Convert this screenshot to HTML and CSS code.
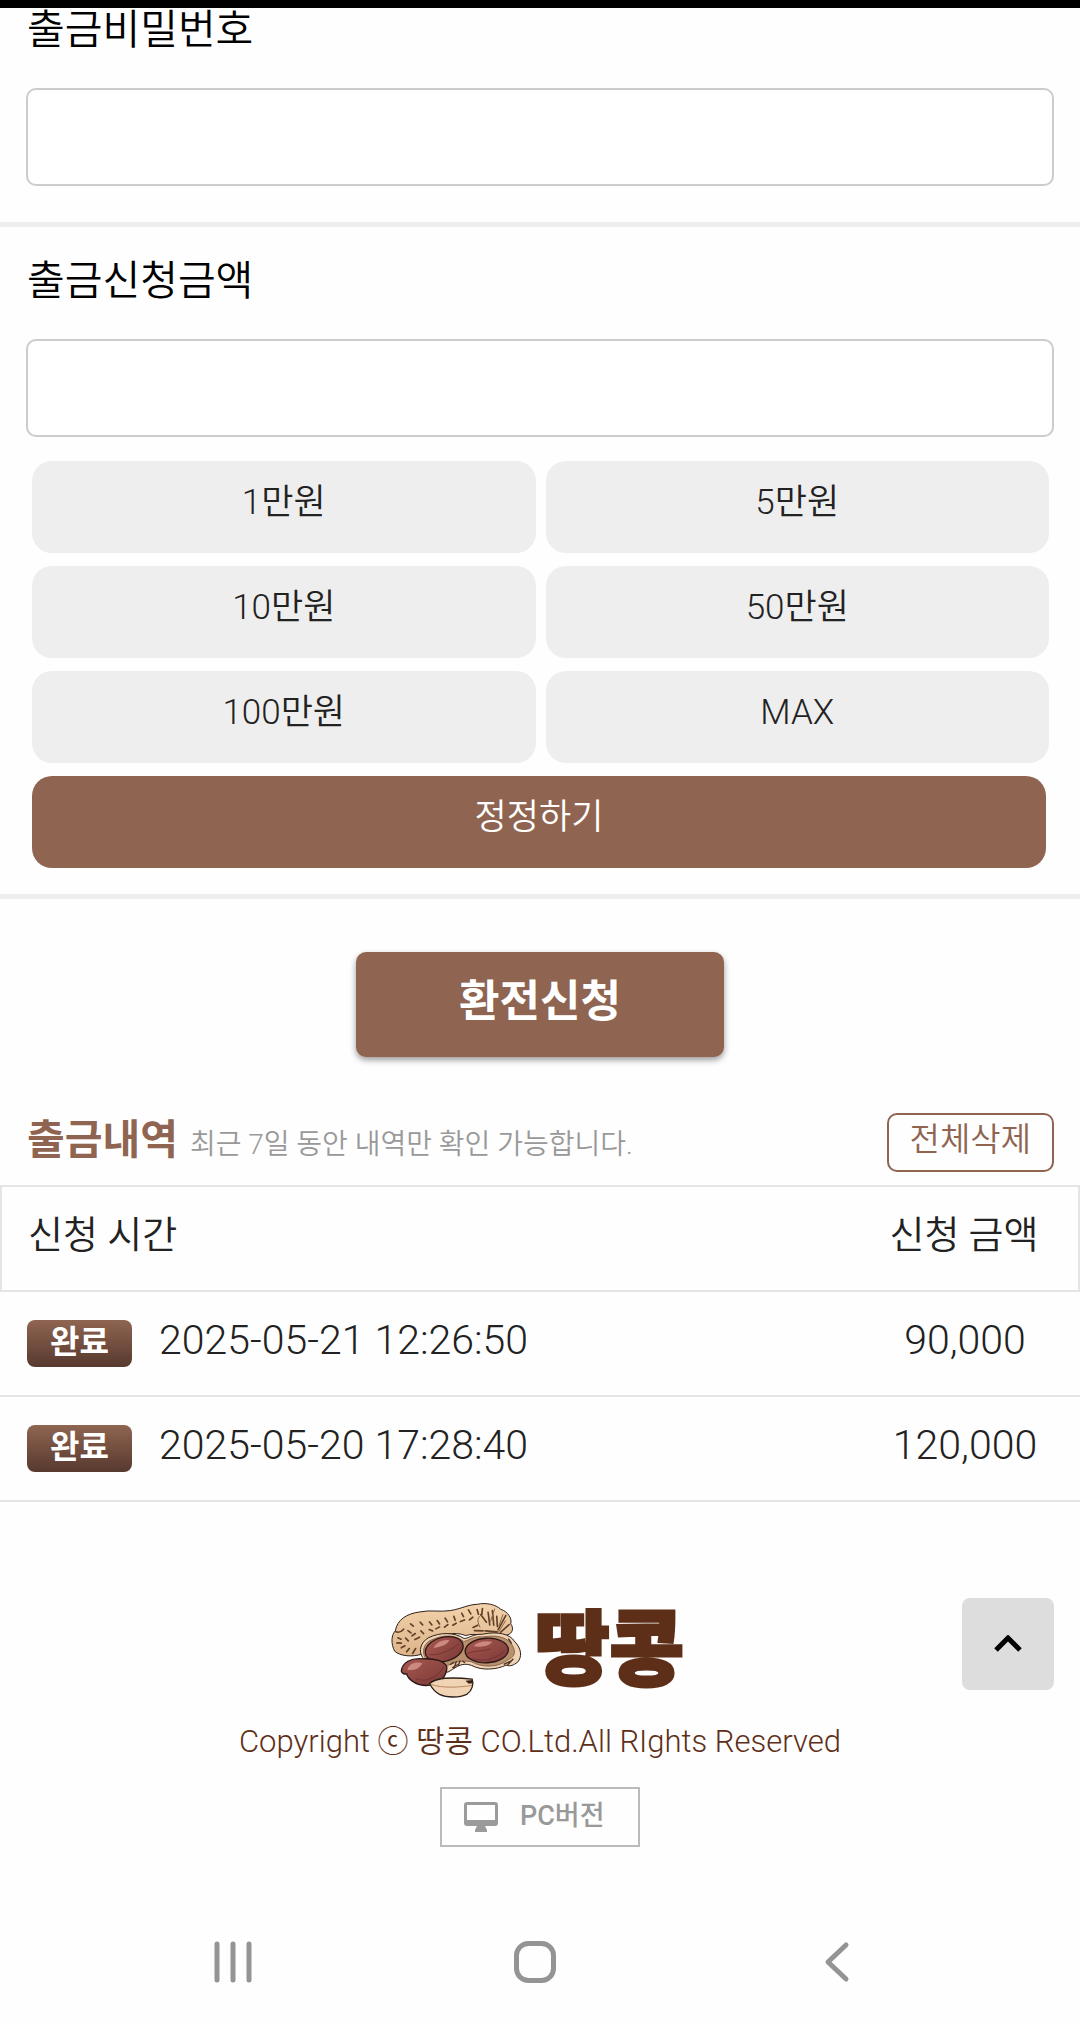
FILE: index.html
```html
<!DOCTYPE html>
<html lang="ko">
<head>
	<meta charset="UTF-8">
	<meta name="viewport" content="width=device-width, initial-scale=1">
	<title>환전신청</title>
	<link rel="stylesheet" href="styles.css">
</head>
<body>
	<div class="status_bar"></div>

	<form class="exchange_form">
		<div class="form_section first">
			<label class="form_label" for="withdraw_pw">출금비밀번호</label>
			<input type="password" id="withdraw_pw" class="form_input">
		</div>

		<div class="form_section">
			<label class="form_label" for="withdraw_amount">출금신청금액</label>
			<input type="text" id="withdraw_amount" class="form_input">
			<div class="amount_btns">
				<button type="button" class="btn_amount">1만원</button>
				<button type="button" class="btn_amount">5만원</button>
				<button type="button" class="btn_amount">10만원</button>
				<button type="button" class="btn_amount">50만원</button>
				<button type="button" class="btn_amount">100만원</button>
				<button type="button" class="btn_amount">MAX</button>
				<button type="reset" class="btn_amount btn_reset">정정하기</button>
			</div>
		</div>

		<button type="submit" class="btn_submit">환전신청</button>
	</form>

	<div class="history_head">
		<div class="history_text">
			<h2 class="history_title">출금내역</h2>
			<span class="history_note">최근 7일 동안 내역만 확인 가능합니다.</span>
		</div>
		<button type="button" class="btn_delete">전체삭제</button>
	</div>

	<table class="history">
		<thead>
			<tr>
				<th class="time">신청 시간</th>
				<th class="amount">신청 금액</th>
			</tr>
		</thead>
		<tbody>
			<tr>
				<td class="time"><div class="time_wrap"><span class="badge">완료</span>2025-05-21 12:26:50</div></td>
				<td class="amount">90,000</td>
			</tr>
			<tr>
				<td class="time"><div class="time_wrap"><span class="badge">완료</span>2025-05-20 17:28:40</div></td>
				<td class="amount">120,000</td>
			</tr>
		</tbody>
	</table>

	<footer class="footer">
		<div class="logo">
			<svg class="logo_peanut" viewBox="28 36 400 290" aria-hidden="true">
				<defs>
					<linearGradient id="shell" x1="0" y1="0" x2="0" y2="1">
						<stop offset="0" stop-color="#f3d2ab"/>
						<stop offset="1" stop-color="#dcb48a"/>
					</linearGradient>
					<linearGradient id="nut" x1="0" y1="0" x2="1" y2="1">
						<stop offset="0" stop-color="#a75850"/>
						<stop offset="1" stop-color="#7c3a38"/>
					</linearGradient>
				</defs>
				<!-- back shell -->
				<path d="M42 183C30 160 32 134 44 122C50 88 78 70 118 65C150 58 177 66 209 61C245 55 262 43 291 42C317 36 346 43 361 57C383 64 396 86 391 101C401 113 397 130 381 134L350 152C305 137 286 127 256 136C220 122 180 135 143 145C126 158 126 172 127 191C96 202 58 198 42 183Z" fill="url(#shell)" stroke="#2e2018" stroke-width="3"/>
				<path d="M44 124C54 129 61 126 69 117M52 143l9 4M49 158l13 1M62 173l11-6M78 185l8-10M96 190l9-15M75 144l8 8M82 121l9 7M98 108l-8-7M104 130l-10 7M103 148l14-7M121 122l8 8M126 104l-7-8M147 95l7 9M146 118l10 4M170 91l7 10M166 116l11-6M194 84l7 11M192 111l10-8M220 78l4 12M217 105l10-6M244 69l5 10M240 94l12-5M264 59l7 12M267 89l10-8M290 58l4 14M278 112l14-7M306 55l-2 18M318 96l-17-23M328 104l-5-38M340 105l-4-44M351 109l-2-31M353 119l23-43M361 126l25-23M282 121l26 1M314 122l36 3" fill="none" stroke="#604028" stroke-width="5" stroke-linecap="round"/>
				<path d="M299 112C288 89 292 81 303 74M368 72L355 108M343 55L330 94M376 91L354 126" fill="none" stroke="#8b6244" stroke-width="3"/>
				<!-- open half with its kernels -->
				<path d="M126 202C113 182 120 157 143 143C179 125 222 126 251 145C268 144 276 131 306 132C351 122 390 132 402 153C425 176 425 201 412 216C399 225 391 230 377 225C351 238 304 243 274 226C240 213 220 238 202 246C172 244 139 225 126 202Z" fill="#f0d3b2" stroke="#2e2018" stroke-width="3"/>
				<path d="M132 200C123 178 133 157 153 149C190 132 227 133 250 154C272 147 282 138 309 140C354 132 383 144 395 164C410 188 401 201 380 211C351 234 302 232 273 215C236 208 211 220 196 230C165 234 145 216 132 200Z" fill="#b8906e" stroke="#654631" stroke-width="2"/>
				<path d="M209 224l12-8M215 233l17-10M228 213l-8 22M239 211l-6 16M254 218l-8-5M370 223l21-10M381 225l18-19M384 145l10 15" fill="none" stroke="#4c3020" stroke-width="4"/>
				<ellipse cx="191" cy="177" rx="58" ry="36" transform="rotate(-14 191 177)" fill="url(#nut)" stroke="#2c1716" stroke-width="4"/>
				<ellipse cx="319" cy="181" rx="65" ry="37" transform="rotate(-3 319 181)" fill="url(#nut)" stroke="#2c1716" stroke-width="4"/>
				<path d="M159 173C168 156 187 147 207 150C200 164 180 170 159 173ZM279 168C292 154 315 150 335 155C325 170 302 171 279 168Z" fill="#cc8980"/>
				<path d="M146 193C174 198 211 181 235 160M260 190C287 180 304 184 329 177M273 205C313 219 354 202 373 181" fill="none" stroke="#642b2a" stroke-width="2"/>
				<!-- loose kernels -->
				<path d="M62 243C65 216 91 203 126 206C163 204 193 213 199 231C199 257 178 285 142 286C107 288 82 267 78 251C70 253 64 249 62 243Z" fill="url(#nut)" stroke="#2c1716" stroke-width="4"/>
				<path d="M80 239C84 220 106 213 125 219C117 236 98 242 80 239Z" fill="#cc8980"/>
				<path d="M105 265C137 280 174 260 189 230" fill="none" stroke="#642b2a" stroke-width="2"/>
				<path d="M147 281C163 263 208 260 275 267C280 280 276 301 260 312C236 324 198 323 177 313C160 304 153 292 147 281Z" fill="#f1d4b4" stroke="#2e2018" stroke-width="4"/>
				<path d="M151 283C187 295 234 292 275 286" fill="none" stroke="#b68762" stroke-width="3"/>
				<path d="M276 270L255 272L264 280L276 280Z" fill="#312016"/>
			</svg>
			<span class="logo_text">땅콩</span>
		</div>
		<p class="copyright">Copyright ⓒ 땅콩 CO.Ltd.All RIghts Reserved</p>
		<a href="#" class="btn_pc">
			<svg class="icon_pc" viewBox="0 0 34 30" aria-hidden="true">
				<path fill-rule="evenodd" d="M3 0H31Q34 0 34 3V21Q34 24 31 24H21L23 28V30H11V28L13 24H3Q0 24 0 21V3Q0 0 3 0ZM3 3V18H31V3Z" fill="#9b9b9b"/>
			</svg>
			<span class="btn_pc_text">PC버전</span>
		</a>
	</footer>

	<button type="button" class="btn_top" aria-label="맨 위로">
		<svg viewBox="0 0 28 18" class="icon_top"><path d="M2 15L14 3L26 15" fill="none" stroke="#000" stroke-width="5"/></svg>
	</button>

	<nav class="system_nav">
		<button type="button" class="btn_nav" aria-label="최근 앱">
			<svg viewBox="0 0 42 42" class="icon_nav"><path d="M5 3V39M21 3V39M37 3V39" stroke="#949494" stroke-width="5" stroke-linecap="round"/></svg>
		</button>
		<button type="button" class="btn_nav" aria-label="홈">
			<svg viewBox="0 0 42 42" class="icon_nav"><rect x="2.5" y="2.5" width="37" height="37" rx="12" fill="none" stroke="#949494" stroke-width="5"/></svg>
		</button>
		<button type="button" class="btn_nav" aria-label="뒤로">
			<svg viewBox="0 0 42 42" class="icon_nav"><path d="M30 4L12 21L30 38" fill="none" stroke="#949494" stroke-width="5" stroke-linecap="round" stroke-linejoin="round"/></svg>
		</button>
	</nav>
</body>
</html>
```
FILE: styles.css
```css
* {
	box-sizing: border-box;
}

body {
	margin: 0;
	background: #fefefe;
	color: #222;
	font-family: Roboto, "Noto Sans CJK KR", sans-serif;
	font-weight: 350;
}

button, input {
	font-family: inherit;
	font-weight: inherit;
}

button {
	border: 0;
	cursor: pointer;
}

.status_bar {
	height: 8px;
	background: #000;
}

/* form */
.form_section {
	padding: 32px 26px 26px;
	border-bottom: 5px solid #eee;
}

.form_section.first {
	padding: 0 26px 36px;
}

.form_label {
	display: block;
	margin: 0 0 36px 1px;
	color: #000;
	font-size: 41px;
	line-height: 44px;
}

.form_input {
	display: block;
	width: 100%;
	height: 98px;
	padding: 0 20px;
	border: 2px solid #ccc;
	border-radius: 10px;
	background: #fff;
	font-size: 40px;
}

.amount_btns {
	display: grid;
	grid-template-columns: 1fr 1fr;
	gap: 13px 10px;
	margin-top: 24px;
	padding: 0 5px 0 6px;
}

.btn_amount {
	height: 92px;
	padding: 0 0 8px;
	border-radius: 20px;
	background: #eee;
	color: #222;
	font-size: 35px;
	line-height: 52px;
}

.btn_reset {
	grid-column: 1 / 3;
	margin-right: 3px;
	background: #8f6551;
	color: #fff;
}

.btn_submit {
	display: block;
	width: 368px;
	height: 105px;
	margin: 53px auto 56px;
	padding: 0 0 14px;
	border-radius: 10px;
	background: #8f6551;
	box-shadow: 0 3px 6px rgba(0, 0, 0, 0.4);
	color: #fff;
	font-size: 44px;
	font-weight: 700;
}

/* history */
.history_head {
	display: flex;
	align-items: flex-start;
	justify-content: space-between;
	padding: 0 26px 13px;
}

.history_text {
	display: flex;
	align-items: baseline;
	gap: 12px;
	padding-left: 1px;
	line-height: 54px;
}

.history_title {
	margin: 0;
	color: #8f6551;
	font-size: 41px;
	font-weight: 700;
}

.history_note {
	color: #999;
	font-size: 28px;
}

.btn_delete {
	height: 59px;
	padding: 0 21px 6px;
	border: 2px solid #8f6551;
	border-radius: 10px;
	background: none;
	color: #8f6551;
	font-size: 33px;
	line-height: 44px;
}

.history {
	width: 100%;
	border-spacing: 0;
	font-size: 41px;
	line-height: 48px;
}

.history th {
	height: 107px;
	padding: 0 26px 8px;
	border-top: 2px solid #e5e5e5;
	border-bottom: 2px solid #e5e5e5;
	font-size: 38px;
	font-weight: 350;
}

.history td {
	height: 105px;
	padding: 0 27px;
	border-bottom: 2px solid #e5e5e5;
}

.history .time {
	text-align: left;
}

.history th.time {
	border-left: 2px solid #e5e5e5;
}

.history .amount {
	width: 230px;
	padding-right: 0;
	padding-left: 0;
	text-align: center;
}

.history th.amount {
	border-right: 2px solid #e5e5e5;
}

.history td.amount {
	padding-bottom: 8px;
}

.time_wrap {
	display: flex;
	align-items: center;
	gap: 27px;
	padding-bottom: 8px;
}

.badge {
	width: 105px;
	height: 47px;
	margin-top: 8px;
	border-radius: 8px;
	background: linear-gradient(#8f6551, #57392f);
	color: #fff;
	font-size: 32px;
	font-weight: 700;
	line-height: 44px;
	text-align: center;
}

/* footer */
.footer {
	display: flex;
	flex-direction: column;
	align-items: center;
	padding: 100px 20px 72px;
}

.logo {
	display: flex;
	align-items: center;
	gap: 12px;
	padding-right: 6px;
}

.logo_peanut {
	width: 133px;
	height: 97px;
}

.logo_text {
	color: #5e2f18;
	font-size: 81px;
	font-weight: 900;
	line-height: 80px;
	-webkit-text-stroke: 3px #5e2f18;
}

.copyright {
	margin: 21px 0 23px;
	color: #5e2f18;
	font-size: 31px;
	line-height: 44px;
}

.btn_pc {
	display: flex;
	align-items: center;
	gap: 22px;
	width: 200px;
	height: 60px;
	padding-left: 22px;
	border: 2px solid #bbb;
	color: #999;
	font-size: 27px;
	font-weight: 500;
	line-height: 40px;
	text-decoration: none;
}

.btn_pc_text {
	padding-bottom: 2px;
}

.icon_pc {
	width: 34px;
	height: 30px;
}

.btn_top {
	position: fixed;
	right: 26px;
	bottom: 336px;
	width: 92px;
	height: 92px;
	padding: 2px 0 0;
	border-radius: 8px;
	background: #ddd;
}

.icon_top {
	width: 28px;
	height: 18px;
}

.system_nav {
	display: grid;
	grid-template-columns: repeat(3, 1fr);
	justify-items: center;
	padding: 22px 92px 22px 82px;
}

.btn_nav {
	padding: 0;
	background: none;
}

.icon_nav {
	display: block;
	width: 42px;
	height: 42px;
}
```
